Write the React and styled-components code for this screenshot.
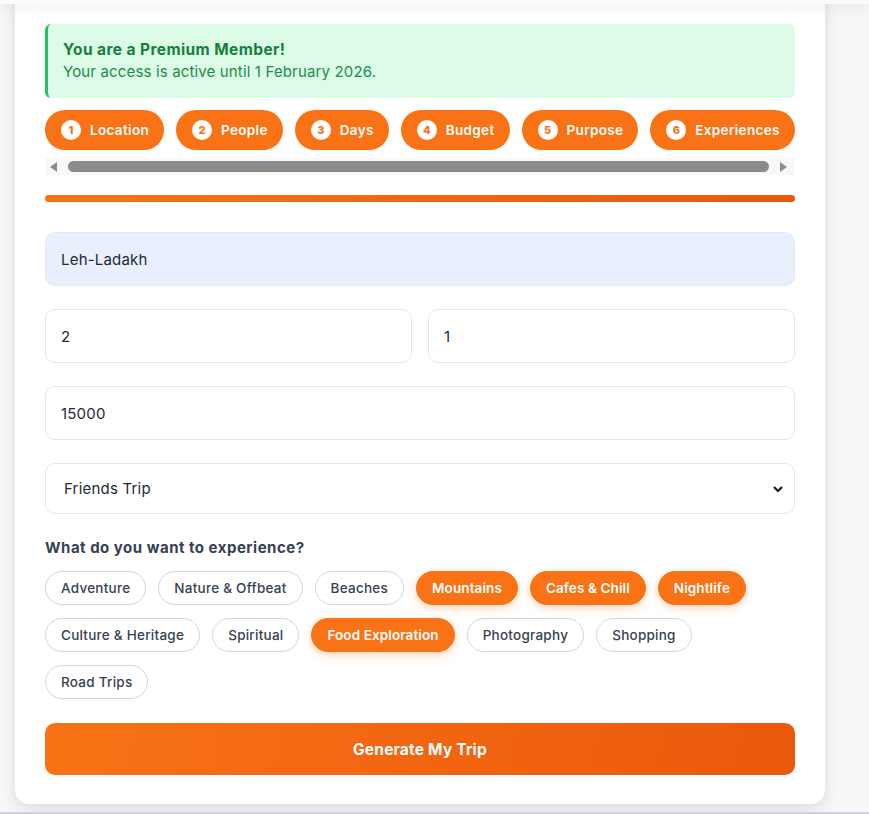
import React from 'react';
import styled, { createGlobalStyle } from 'styled-components';

const GlobalStyle = createGlobalStyle`
    * { box-sizing: border-box; }
    html, body {
        margin: 0;
        padding: 0;
        background: #f6f7f9;
        font-family: Inter, "Open Sans", sans-serif;
    }
`;

const Page = styled.div`
    position: relative;
    width: 869px;
    height: 814px;
    overflow: hidden;
    background: #f6f7f9;
`;

const Header = styled.div`
    height: 4px;
    background: #fafafa;
    box-shadow: 0 3px 14px rgba(0, 0, 0, 0.14);
    position: relative;
    z-index: 2;
`;

const Card = styled.div`
    margin-left: 15px;
    margin-top: -10px;
    width: 810px;
    background: #fff;
    border-radius: 0 0 14px 14px;
    box-shadow: 0 4px 14px rgba(0, 0, 0, 0.12);
    padding: 30px 30px 29px;
`;

const BottomLine = styled.div`
    margin-top: 8px;
    height: 2px;
    background: #d6d1e2;
`;

const Alert = styled.div`
    background: #dcfce7;
    border-left: 3px solid #22c55e;
    border-radius: 6px;
    padding: 15px 15px 16px;
    height: 74px;
`;

const AlertTitle = styled.div`
    color: #15803d;
    font-size: 15.5px;
    font-weight: 700;
    letter-spacing: 0.4px;
    line-height: 22px;
`;

const AlertText = styled.div`
    color: #1b8c47;
    font-size: 15px;
    letter-spacing: 0.15px;
    line-height: 22px;
`;

const Steps = styled.div`
    display: flex;
    gap: 12px;
    margin-top: 12px;
`;

const Step = styled.div`
    height: 40px;
    display: flex;
    align-items: center;
    gap: 9px;
    padding: 0 15px 0 16px;
    border-radius: 20px;
    background: #f97316;
    color: #fff;
    font-size: 13.5px;
    font-weight: 600;
    letter-spacing: 0.33px;
    white-space: nowrap;
    flex: none;
`;

const StepNum = styled.span`
    width: 20px;
    height: 20px;
    border-radius: 50%;
    background: #fff;
    color: #f97316;
    font-size: 11px;
    font-weight: 800;
    letter-spacing: 0;
    display: flex;
    align-items: center;
    justify-content: center;
`;

const Scrollbar = styled.div`
    margin-top: 8px;
    height: 17px;
    background: #f8f8f8;
    display: flex;
    align-items: center;
    padding: 0 8px 0 5px;
    gap: 11px;
`;

const Thumb = styled.div`
    flex: 1;
    height: 11px;
    border-radius: 6px;
    background: #8b8b8b;
`;

const Arrow = ({ dir }) => (
    <svg width="7" height="10" viewBox="0 0 7 10">
        {dir === 'left'
            ? <polygon points="7,0 7,10 0,5" fill="#8b8b8b" />
            : <polygon points="0,0 0,10 7,5" fill="#8b8b8b" />}
    </svg>
);

const Progress = styled.div`
    margin-top: 20px;
    height: 7px;
    border-radius: 4px;
    background: linear-gradient(90deg, #f97316, #ea580c);
`;

const Form = styled.div`
    margin-top: 30px;
    display: flex;
    flex-direction: column;
    gap: 23px;
`;

const Row = styled.div`
    display: flex;
    gap: 16px;
`;

const Input = styled.div`
    flex: 1;
    height: ${p => (p.$select ? 51 : 54)}px;
    border: 1px solid #e2e8f0;
    border-radius: 10px;
    background: ${p => (p.$filled ? '#e8f0fe' : '#fff')};
    display: flex;
    align-items: center;
    justify-content: space-between;
    padding: 0 10px 0 ${p => (p.$select ? 18 : 15)}px;
    font-size: 15px;
    letter-spacing: 0.2px;
    color: #1f2937;
`;

const Label = styled.div`
    margin-top: 24px;
    font-size: 15px;
    font-weight: 700;
    letter-spacing: 0.5px;
    color: #374151;
    line-height: 20px;
`;

const Chips = styled.div`
    margin-top: 13px;
    display: flex;
    flex-wrap: wrap;
    gap: 13px 12px;
`;

const Chip = styled.div`
    height: 34px;
    padding: 0 15px;
    border-radius: 17px;
    display: flex;
    align-items: center;
    font-size: 13.5px;
    letter-spacing: ${p => (p.$on ? 0.1 : 0.25)}px;
    font-weight: ${p => (p.$on ? 600 : 500)};
    border: 1px solid ${p => (p.$on ? '#f97316' : '#d4d5dc')};
    background: ${p => (p.$on ? '#f97316' : '#fff')};
    color: ${p => (p.$on ? '#fff' : '#374151')};
    box-shadow: ${p => (p.$on ? '0 3px 8px rgba(249, 115, 22, 0.3)' : 'none')};
`;

const Button = styled.div`
    margin-top: 24px;
    height: 52px;
    border-radius: 10px;
    background: linear-gradient(100deg, #f97316, #ea580c);
    color: #fff;
    font-size: 15.5px;
    font-weight: 700;
    letter-spacing: 0.2px;
    display: flex;
    align-items: center;
    justify-content: center;
`;

const steps = ['Location', 'People', 'Days', 'Budget', 'Purpose', 'Experiences'];

const experiences = [
    ['Adventure', false],
    ['Nature & Offbeat', false],
    ['Beaches', false],
    ['Mountains', true],
    ['Cafes & Chill', true],
    ['Nightlife', true],
    ['Culture & Heritage', false],
    ['Spiritual', false],
    ['Food Exploration', true],
    ['Photography', false],
    ['Shopping', false],
    ['Road Trips', false],
];

const Chevron = () => (
    <svg width="12" height="8" viewBox="0 0 12 8">
        <polyline points="2,2 6,6 10,2" fill="none" stroke="#111827" strokeWidth="2.2" />
    </svg>
);

const App = () => (
    <>
        <GlobalStyle />
        <Page>
            <Header />
            <Card>
                <Alert>
                    <AlertTitle>You are a Premium Member!</AlertTitle>
                    <AlertText>Your access is active until 1 February 2026.</AlertText>
                </Alert>
                <Steps>
                    {steps.map((s, i) => (
                        <Step key={s}>
                            <StepNum>{i + 1}</StepNum>
                            {s}
                        </Step>
                    ))}
                </Steps>
                <Scrollbar>
                    <Arrow dir="left" />
                    <Thumb />
                    <Arrow dir="right" />
                </Scrollbar>
                <Progress />
                <Form>
                    <Row>
                        <Input $filled>Leh-Ladakh</Input>
                    </Row>
                    <Row>
                        <Input>2</Input>
                        <Input>1</Input>
                    </Row>
                    <Row>
                        <Input>15000</Input>
                    </Row>
                    <Row>
                        <Input $select>
                            Friends Trip
                            <Chevron />
                        </Input>
                    </Row>
                </Form>
                <Label>What do you want to experience?</Label>
                <Chips>
                    {experiences.map(([name, on]) => (
                        <Chip key={name} $on={on}>{name}</Chip>
                    ))}
                </Chips>
                <Button>Generate My Trip</Button>
            </Card>
            <BottomLine />
        </Page>
    </>
);

export default App;
